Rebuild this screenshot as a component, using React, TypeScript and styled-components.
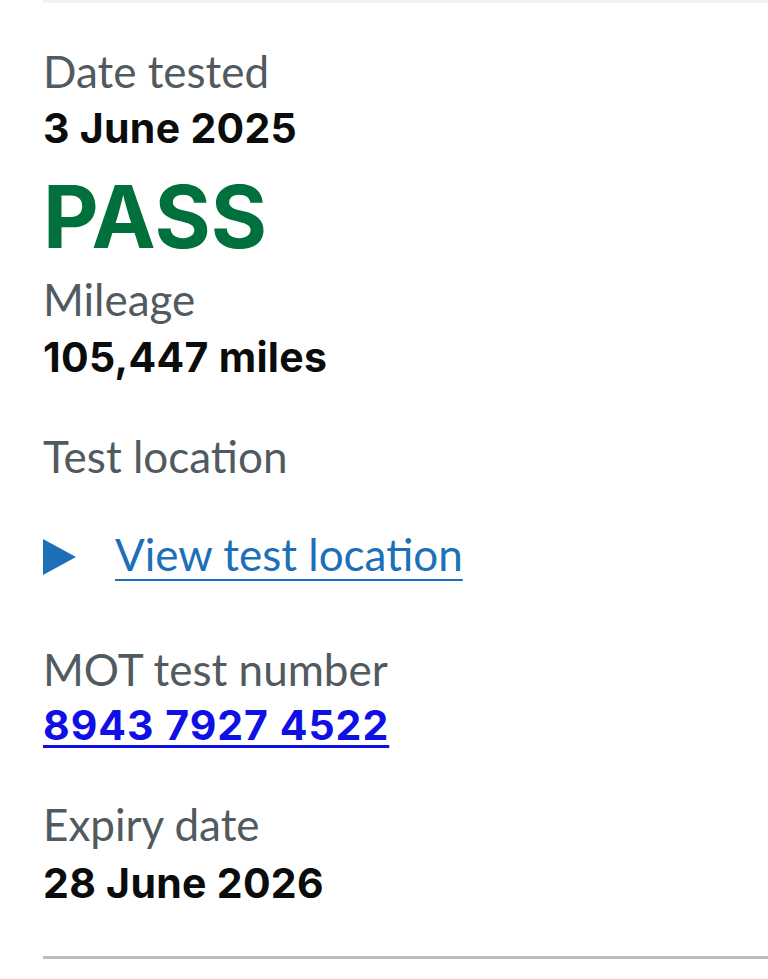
import React from "react";
import styled, { createGlobalStyle } from "styled-components";

const Global = createGlobalStyle`
  html, body { margin: 0; padding: 0; background: #ffffff; }
  body { font-family: Lato, "Noto Sans", sans-serif; color: #0b0c0c; }
`;

const Page = styled.main`
  padding-left: 43px;
  width: 725px;
`;

const TopStrip = styled.div`
  height: 3px;
  background: #f3f2f1;
`;

const List = styled.dl`
  margin: 0;
  padding-top: 42px;
  padding-bottom: 48px;
  border-bottom: 3px solid #bdbdbd;
`;

const Row = styled.div<{ $gap?: number }>`
  margin-top: ${(p) => p.$gap ?? 0}px;
`;

const Label = styled.dt`
  margin: 0;
  font-size: 44px;
  line-height: 52.8px;
  color: #505a5f;
  font-weight: 400;
`;

const Value = styled.dd<{ $gap?: number }>`
  margin: ${(p) => p.$gap ?? 5}px 0 0 0;
  font-family: Inter, Lato, sans-serif;
  font-size: 41px;
  line-height: 50.4px;
  font-weight: 700;
  letter-spacing: 0.3px;
  color: #0b0c0c;
`;

const Result = styled.div`
  margin-top: 12px;
  font-family: Inter, Lato, sans-serif;
  font-size: 86px;
  line-height: 105.6px;
  font-weight: 700;
  color: #00703c;
`;

const Details = styled.div`
  margin-top: 45px;
  display: flex;
  align-items: center;
  gap: 39px;
`;

const Arrow = styled.span`
  width: 0;
  height: 0;
  border-top: 18px solid transparent;
  border-bottom: 18px solid transparent;
  border-left: 33px solid #1d70b8;
  margin-top: 6px;
`;

const SummaryLink = styled.a`
  font-size: 44px;
  line-height: 52.8px;
  color: #1d70b8;
  text-decoration: underline;
  text-decoration-thickness: 2px;
  text-underline-offset: 8px;
`;

const NumberLink = styled.a`
  color: #0f0fe6;
  letter-spacing: 1px;
  text-decoration: underline;
  text-decoration-thickness: 3px;
  text-underline-offset: 5px;
`;

export default function App() {
  return (
    <>
      <Global />
      <Page>
        <TopStrip />
        <List>
          <Row>
            <Label>Date tested</Label>
            <Value>3 June 2025</Value>
          </Row>
          <Result>PASS</Result>
          <Row $gap={2}>
            <Label>Mileage</Label>
            <Value $gap={6}>105,447 miles</Value>
          </Row>
          <Row $gap={48}>
            <Label>Test location</Label>
            <Details>
              <Arrow />
              <SummaryLink href="#">View test location</SummaryLink>
            </Details>
          </Row>
          <Row $gap={62}>
            <Label>MOT test number</Label>
            <Value>
              <NumberLink href="#">8943 7927 4522</NumberLink>
            </Value>
          </Row>
          <Row $gap={47}>
            <Label>Expiry date</Label>
            <Value $gap={7}>28 June 2026</Value>
          </Row>
        </List>
      </Page>
    </>
  );
}
